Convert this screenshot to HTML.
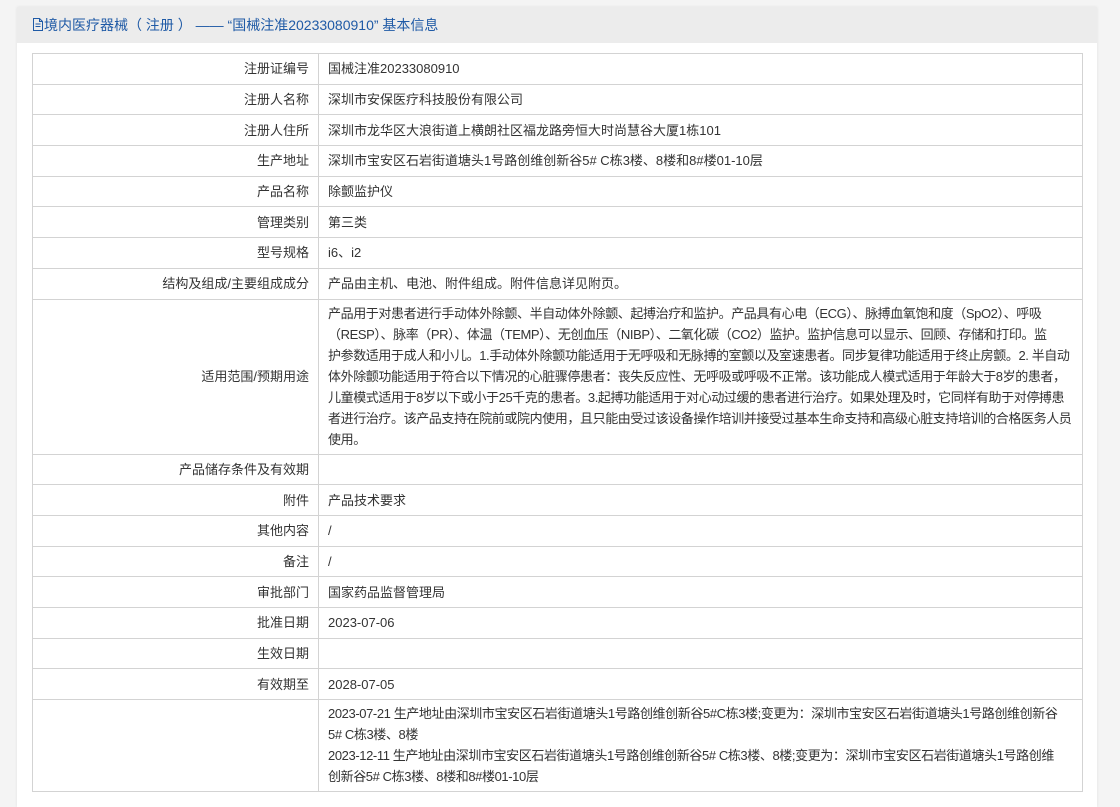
<!DOCTYPE html>
<html><head><meta charset="utf-8"><style>
body{margin:0;background:#f4f4f4;font-family:"Liberation Sans","Noto Sans CJK SC",sans-serif;font-size:13px;color:#333;overflow:hidden;height:755px}
.panel{position:absolute;left:17px;top:7px;width:1080px;height:800px;background:#fff;box-shadow:0 0 3px rgba(0,0,0,.08)}
.hd{height:36px;background:#ececec;color:#1f5aa6;font-size:14px;line-height:36px;padding-left:15px}
table{position:absolute;left:15px;top:46px;width:1051px;border-collapse:collapse;table-layout:fixed}
td{border:1px solid #d3d3d3;padding:0 9px;height:29.7px;line-height:21px;vertical-align:middle}
td.l{text-align:right;width:267px;color:#333}
td.big{padding:3px 8px 4px 9px;letter-spacing:-0.4px}
td.big span{display:block;white-space:nowrap;overflow:hidden}
</style></head><body>
<div class="panel">
<div class="hd"><svg width="12" height="13" viewBox="0 0 12 13" style="vertical-align:-1px"><path d="M1.5 .5h6l3 3v9h-9z M7.5 .5v3h3 M3.5 6h5 M3.5 8.5h5" fill="none" stroke="#1f5aa6"/></svg>境内医疗器械（ 注册 ） —— “国械注准20233080910” 基本信息</div>
<table>
<tr><td class="l">注册证编号</td><td>国械注准20233080910</td></tr>
<tr><td class="l">注册人名称</td><td>深圳市安保医疗科技股份有限公司</td></tr>
<tr><td class="l">注册人住所</td><td>深圳市龙华区大浪街道上横朗社区福龙路旁恒大时尚慧谷大厦1栋101</td></tr>
<tr><td class="l">生产地址</td><td>深圳市宝安区石岩街道塘头1号路创维创新谷5# C栋3楼、8楼和8#楼01-10层</td></tr>
<tr><td class="l">产品名称</td><td>除颤监护仪</td></tr>
<tr><td class="l">管理类别</td><td>第三类</td></tr>
<tr><td class="l">型号规格</td><td>i6、i2</td></tr>
<tr><td class="l">结构及组成/主要组成成分</td><td>产品由主机、电池、附件组成。附件信息详见附页。</td></tr>
<tr><td class="l">适用范围/预期用途</td><td class="big"><span>产品用于对患者进行手动体外除颤、半自动体外除颤、起搏治疗和监护。产品具有心电（ECG）、脉搏血氧饱和度（SpO2）、呼吸</span><span>（RESP）、脉率（PR）、体温（TEMP）、无创血压（NIBP）、二氧化碳（CO2）监护。监护信息可以显示、回顾、存储和打印。监</span><span>护参数适用于成人和小儿。1.手动体外除颤功能适用于无呼吸和无脉搏的室颤以及室速患者。同步复律功能适用于终止房颤。2. 半自动</span><span>体外除颤功能适用于符合以下情况的心脏骤停患者：丧失反应性、无呼吸或呼吸不正常。该功能成人模式适用于年龄大于8岁的患者，</span><span>儿童模式适用于8岁以下或小于25千克的患者。3.起搏功能适用于对心动过缓的患者进行治疗。如果处理及时，它同样有助于对停搏患</span><span>者进行治疗。该产品支持在院前或院内使用，且只能由受过该设备操作培训并接受过基本生命支持和高级心脏支持培训的合格医务人员</span><span>使用。</span></td></tr>
<tr><td class="l">产品储存条件及有效期</td><td></td></tr>
<tr><td class="l">附件</td><td>产品技术要求</td></tr>
<tr><td class="l">其他内容</td><td>/</td></tr>
<tr><td class="l">备注</td><td>/</td></tr>
<tr><td class="l">审批部门</td><td>国家药品监督管理局</td></tr>
<tr><td class="l">批准日期</td><td>2023-07-06</td></tr>
<tr><td class="l">生效日期</td><td></td></tr>
<tr><td class="l">有效期至</td><td>2028-07-05</td></tr>
<tr><td class="l"></td><td class="big"><span>2023-07-21 生产地址由深圳市宝安区石岩街道塘头1号路创维创新谷5#C栋3楼;变更为：深圳市宝安区石岩街道塘头1号路创维创新谷</span><span>5# C栋3楼、8楼</span><span>2023-12-11 生产地址由深圳市宝安区石岩街道塘头1号路创维创新谷5# C栋3楼、8楼;变更为：深圳市宝安区石岩街道塘头1号路创维</span><span>创新谷5# C栋3楼、8楼和8#楼01-10层</span></td></tr>
</table>
</div>
</body></html>
